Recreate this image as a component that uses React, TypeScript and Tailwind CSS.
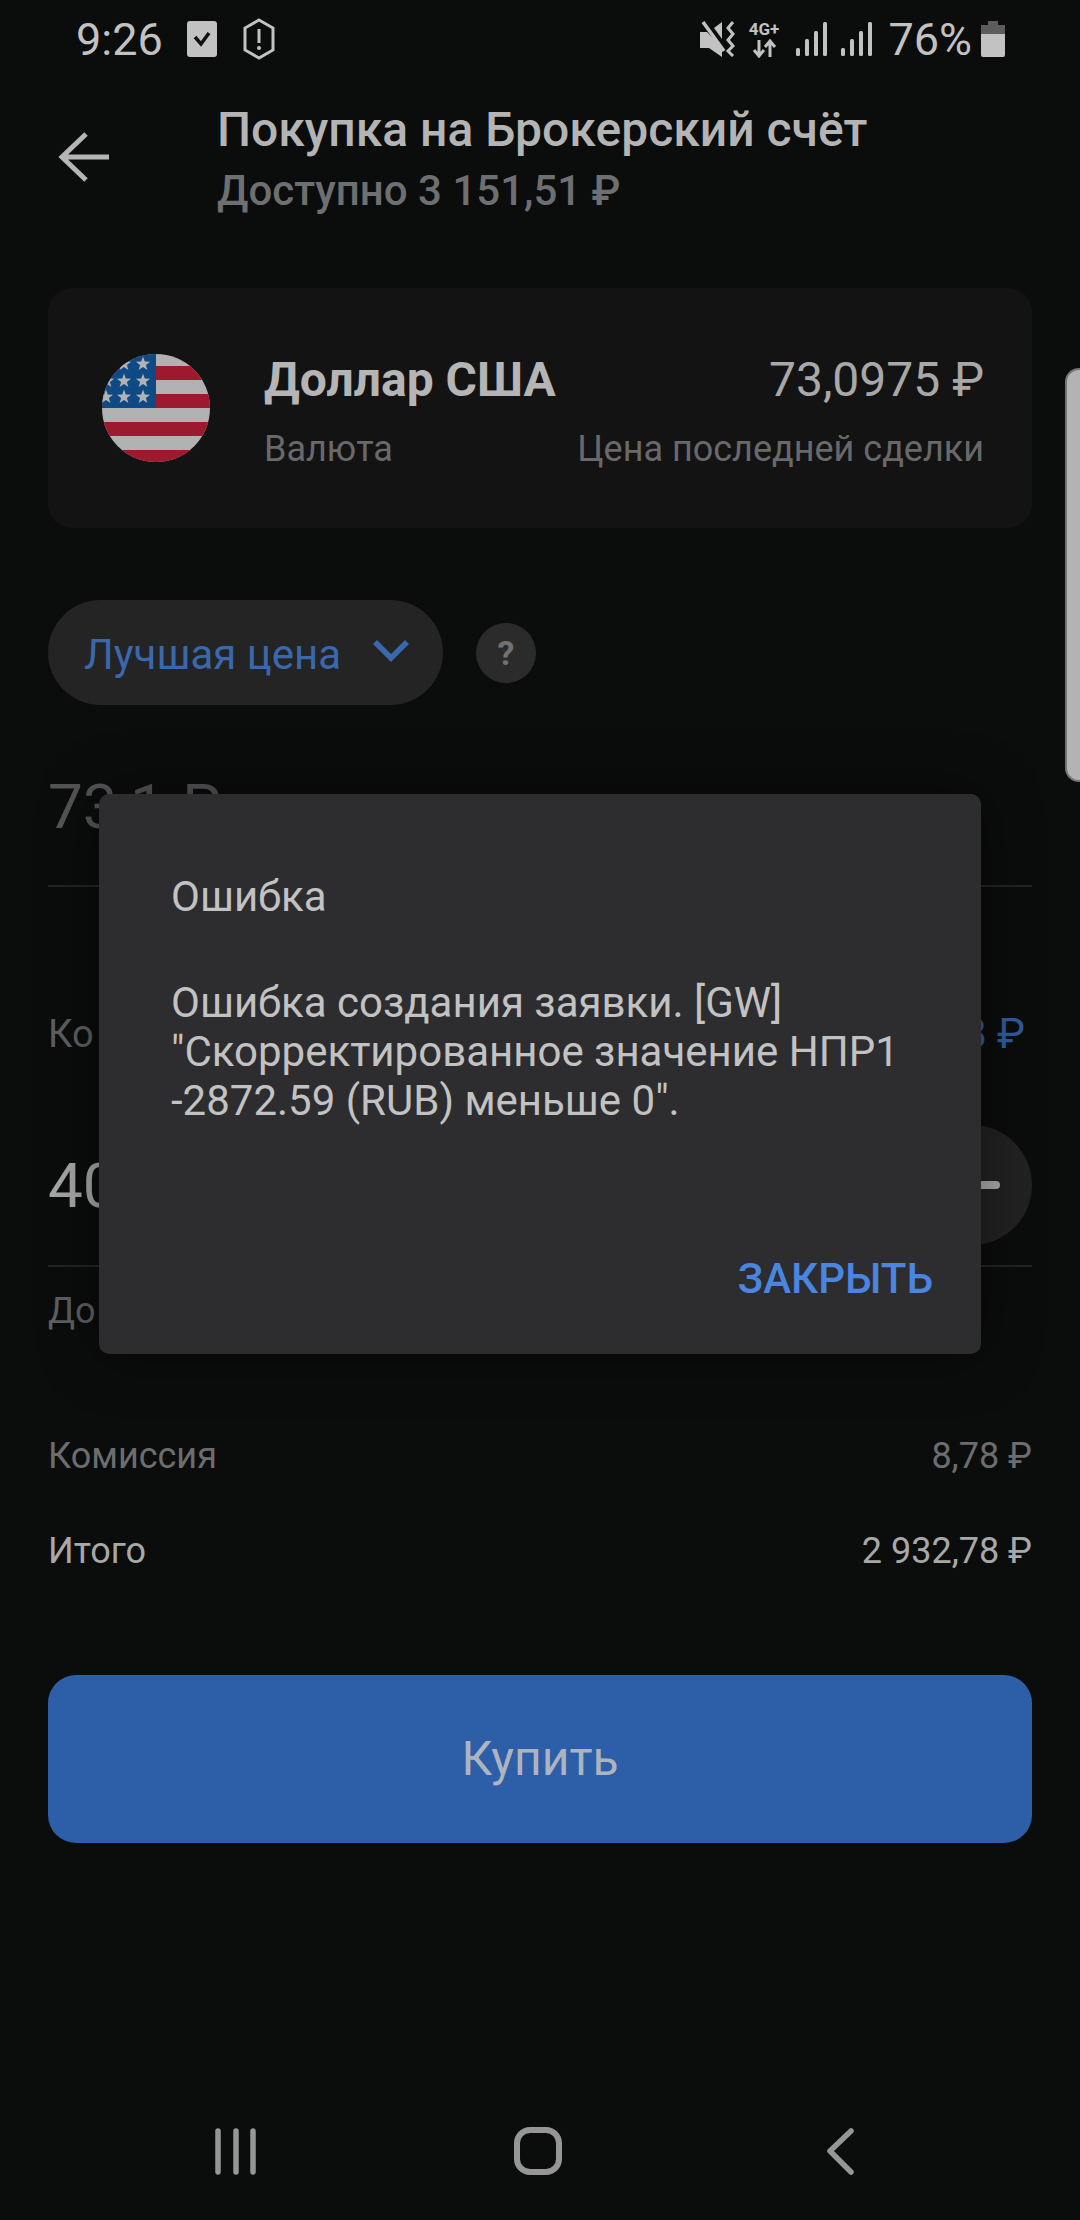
function Star({ x, y }: { x: number; y: number }) {
  const pts = [];
  for (let i = 0; i < 10; i++) {
    const r = i % 2 === 0 ? 7.5 : 3;
    const a = -Math.PI / 2 + (i * Math.PI) / 5;
    pts.push(`${x + r * Math.cos(a)},${y + r * Math.sin(a)}`);
  }
  return <polygon points={pts.join(' ')} fill="#b3b3b3" />;
}

function Flag() {
  return (
    <svg width="108" height="108" viewBox="0 0 108 108" className="shrink-0">
      <defs>
        <clipPath id="round">
          <circle cx="54" cy="54" r="54" />
        </clipPath>
      </defs>
      <g clipPath="url(#round)">
        <rect width="108" height="108" fill="#b1b1b1" />
        {[12, 40, 68, 96].map(y => (
          <rect key={y} x="0" y={y} width="108" height="14" fill="#9d1a2e" />
        ))}
        <rect x="0" y="0" width="54" height="54" fill="#0f4a85" />
        <Star x={41} y={10} />
        <Star x={41} y={27} />
        <Star x={41} y={43} />
        <Star x={22} y={27} />
        <Star x={22} y={43} />
        <Star x={22} y={10} />
        <Star x={4} y={43} />
        <Star x={5} y={27} />
      </g>
    </svg>
  );
}

function Signal({ className }: { className: string }) {
  return (
    <svg width="32" height="34" viewBox="0 0 32 34" className={className}>
      <rect x="0" y="26" width="4" height="8" rx="1.5" fill="#c2c2c2" />
      <rect x="9" y="17" width="4" height="17" rx="1.5" fill="#c2c2c2" />
      <rect x="18" y="9" width="4" height="25" rx="1.5" fill="#c2c2c2" />
      <rect x="27" y="0" width="4" height="34" rx="1.5" fill="#c2c2c2" />
    </svg>
  );
}

function StatusBar() {
  return (
    <div className="flex h-[78px] items-center justify-between pl-[76px] pr-[75px] text-[#c2c2c2]">
      <div className="flex items-center">
        <span className="text-[45px] leading-none">9:26</span>
        <svg width="30" height="38" viewBox="0 0 30 38" className="ml-[24px]">
          <rect x="0" y="1" width="30" height="36" rx="3" fill="#c2c2c2" />
          <path d="M8 17l6 7 8-11" fill="none" stroke="#111" strokeWidth="3.5" />
        </svg>
        <svg width="34" height="42" viewBox="0 0 34 42" className="ml-[25px]">
          <path d="M17 2l14 8v22l-14 8-14-8V10z" fill="none" stroke="#c2c2c2" strokeWidth="3" />
          <path d="M17 11v14" stroke="#c2c2c2" strokeWidth="3" />
          <circle cx="17" cy="30" r="2" fill="#c2c2c2" />
        </svg>
      </div>
      <div className="flex items-center">
        <svg width="36" height="36" viewBox="0 0 36 36">
          <path d="M0 11h7l6 6 9 10v9L9 27H0z" fill="#c2c2c2" />
          <path d="M3 1l21 29" stroke="#c2c2c2" strokeWidth="3.5" />
          <path d="M14 7l8-6v17z" fill="#c2c2c2" />
          <path d="M33 1l-5 6 5 6-5 6 5 6-5 5 5 5" fill="none" stroke="#c2c2c2" strokeWidth="3" />
        </svg>
        <div className="ml-[10px] flex w-[35px] flex-col items-center">
          <span className="text-[17px] font-bold leading-[16px]">4G+</span>
          <svg width="26" height="19" viewBox="0 0 26 19" className="mt-[2px]">
            <path d="M8 1v15M3 11l5 6 5-6M19 18V3M14 8l5-6 5 6" fill="none" stroke="#c2c2c2" strokeWidth="3" />
          </svg>
        </div>
        <Signal className="ml-[15px]" />
        <Signal className="ml-[13px]" />
        <span className="ml-[15px] text-[45px] leading-none">76%</span>
        <svg width="24" height="36" viewBox="0 0 24 36" className="ml-[9px]">
          <path d="M7 0h10v4h7v9H0V4h7z" fill="#5c5c5c" />
          <path d="M0 13h24v21a2 2 0 0 1-2 2H2a2 2 0 0 1-2-2z" fill="#c2c2c2" />
        </svg>
      </div>
    </div>
  );
}

function Row({ label, value, color }: { label: string; value: string; color: string }) {
  return (
    <div className={`flex items-center justify-between text-[36px] leading-[40px] ${color}`}>
      <span>{label}</span>
      <span>{value}</span>
    </div>
  );
}

export default function App() {
  return (
    <div className="relative h-[2220px] w-[1080px] overflow-hidden bg-[#0b0c0c] font-['Roboto',sans-serif]">
      <StatusBar />

      {/* header */}
      <div className="flex h-[210px] items-start pl-[58px] pt-[26px]">
        <svg width="54" height="50" viewBox="0 0 54 50" className="mt-[28px] shrink-0">
          <path d="M51 25H6M28 2L4 25l24 23" fill="none" stroke="#b5b5b5" strokeWidth="5" />
        </svg>
        <div className="ml-[105px]">
          <div className="text-[48px] font-medium leading-[52px] text-[#b4b4b4]">Покупка на Брокерский счёт</div>
          <div className="mt-[12px] text-[42px] font-medium leading-[46px] text-[#6e6f71]">Доступно 3 151,51 ₽</div>
        </div>
      </div>

      <div className="px-[48px]">
        {/* currency card */}
        <div className="flex h-[240px] items-start rounded-[24px] bg-[#131314] pl-[54px] pr-[48px] pt-[66px]">
          <Flag />
          <div className="ml-[54px] flex-1">
            <div className="flex items-center justify-between">
              <span className="text-[48px] font-bold leading-[52px] text-[#b5b5b5]">Доллар США</span>
              <span className="text-[48px] leading-[52px] text-[#a8a8a8]">73,0975 ₽</span>
            </div>
            <div className="mt-[23px] flex items-center justify-between text-[36px] leading-[40px] text-[#69696b]">
              <span>Валюта</span>
              <span>Цена последней сделки</span>
            </div>
          </div>
        </div>

        {/* order type */}
        <div className="mt-[72px] flex items-center">
          <div className="flex h-[105px] w-[395px] items-center rounded-full bg-[#242425] pl-[36px]">
            <span className="mt-[3px] text-[42px] text-[#3a68ad]">Лучшая цена</span>
            <svg width="38" height="24" viewBox="0 0 38 24" className="ml-[31px] -mt-[4px]">
              <path d="M3 3l16 16L35 3" fill="none" stroke="#3a68ad" strokeWidth="5.5" />
            </svg>
          </div>
          <div className="ml-[33px] flex h-[60px] w-[60px] items-center justify-center rounded-full bg-[#2b2b2c] text-[34px] font-bold leading-none text-[#727272]">?</div>
        </div>

        {/* price */}
        <div className="mt-[46px] flex h-[136px] items-start border-b-2 border-[#232324] text-[62px] leading-[72px] text-[#555557]">
          <span className="mt-[20px]">73,1 ₽</span>
        </div>

        <div className="mt-[125px] flex items-center justify-between leading-[44px] text-[#5f6062]">
          <span className="text-[38px]">Ко</span>
          <span className="mr-[7px] text-[42px] text-[#2f5c9f]">8 ₽</span>
        </div>

        {/* amount */}
        <div className="mt-[69px] flex h-[142px] items-start justify-between border-b-2 border-[#232324]">
          <span className="mt-[25px] text-[62px] leading-[72px] text-[#a8a8a8]">40</span>
          <div className="flex h-[120px] w-[120px] items-center justify-center rounded-full bg-[#222223]">
            <div className="ml-[26px] h-[8px] w-[30px] rounded-full bg-[#ababab]" />
          </div>
        </div>

        <div className="mt-[24px] text-[36px] leading-[40px] text-[#5f6062]">До</div>

        {/* totals */}
        <div className="mt-[105px]">
          <Row label="Комиссия" value="8,78 ₽" color="text-[#6c6d6f]" />
        </div>
        <div className="mt-[55px]">
          <Row label="Итого" value="2 932,78 ₽" color="text-[#a8a8a8]" />
        </div>

        <div className="mt-[104px] flex h-[168px] items-center justify-center rounded-[28px] bg-[#2d5ea8] text-[48px] text-[#aeb4bf]">Купить</div>
      </div>

      {/* nav bar */}
      <div className="absolute bottom-0 left-0 right-0 h-[120px]">
        <svg width="1080" height="120" viewBox="0 0 1080 120">
          <path d="M218 31v41M236 31v41M253 31v41" stroke="#969696" strokeWidth="5.5" strokeLinecap="round" />
          <rect x="517" y="30" width="42" height="42" rx="13" fill="none" stroke="#969696" strokeWidth="6" />
          <path d="M851 31l-21 20 21 21" fill="none" stroke="#969696" strokeWidth="5.5" strokeLinecap="round" strokeLinejoin="round" />
        </svg>
      </div>

      {/* scroll handle */}
      <div className="absolute right-0 top-[368px] h-[414px] w-[15px] rounded-l-[14px] border-y-2 border-l-2 border-[#757575] bg-[#b3b3b3]" />

      {/* dialog */}
      <div className="absolute left-[99px] top-[794px] flex h-[560px] w-[882px] flex-col rounded-[10px] bg-[#2d2d2f] pl-[72px] pr-[48px] shadow-[0_0_60px_rgba(0,0,0,0.45)]">
        <div className="mt-[79px] text-[42px] leading-[48px] text-[#c2c2c2]">Ошибка</div>
        <div className="mt-[57px] text-[42px] leading-[49px] text-[#c2c2c2]">
          Ошибка создания заявки. [GW]
          <br />
          "Скорректированное значение НПР1
          <br />
          -2872.59 (RUB) меньше 0".
        </div>
        <div className="mt-auto mb-[50px] text-right text-[42px] font-medium leading-[50px] text-[#4a85e0]">ЗАКРЫТЬ</div>
      </div>
    </div>
  );
}
